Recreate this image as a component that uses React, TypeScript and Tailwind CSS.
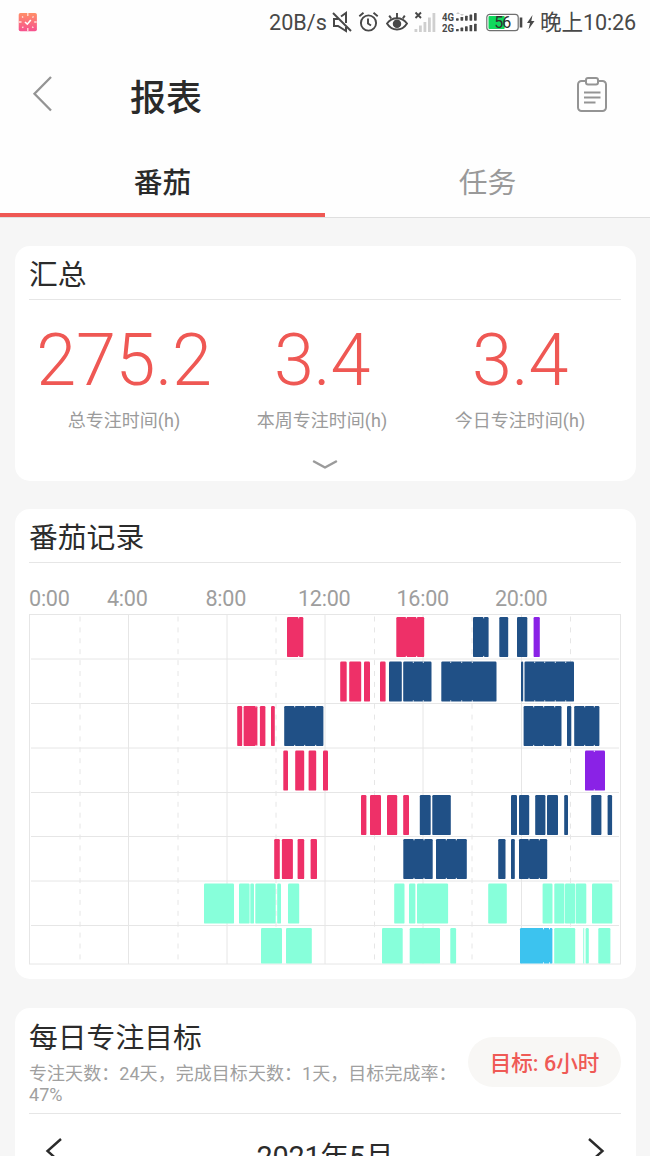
import type { ReactNode } from 'react';
import clsx from 'clsx';

type Color = 'pink' | 'navy' | 'purple' | 'mint' | 'sky';

interface Block {
  color: Color;
  // [start, end, ...joints between back-to-back sessions]
  spans: number[][];
}

const fills: Record<Color, string> = {
  pink: 'fill-[#ee3068]',
  navy: 'fill-[#205086]',
  purple: 'fill-[#8a22e6]',
  mint: 'fill-[#87ffda]',
  sky: 'fill-[#3cc3ef]',
};

const CHART_LEFT = 29;
const ROW_LINES = [0.5, 45, 89.5, 134, 178.5, 222.5, 267, 311.5, 350];
const SOLID_LINES = [99.5, 198, 296, 394, 492.5];
const DASHED_LINES = [51, 149, 247, 345.5, 443, 541.5];

const rows: Block[][] = [
  [
    { color: 'pink', spans: [[287, 303.3, 298.7], [396.3, 424.2, 406.3, 416.7]] },
    { color: 'navy', spans: [[473, 488.6, 483.7], [499.3, 508.2], [517, 527.3]] },
    { color: 'purple', spans: [[533.6, 539.8]] },
  ],
  [
    { color: 'pink', spans: [[340.2, 346.7], [349.2, 361.2], [364, 370], [380, 385.6]] },
    {
      color: 'navy',
      spans: [
        [389, 401.8],
        [403.2, 431.5, 413.3, 423.3],
        [441.3, 496.5, 450.7, 461.7, 472.3],
        [521, 523.2],
        [524.5, 574, 534.7, 544.7, 555.3, 565.7],
      ],
    },
  ],
  [
    { color: 'pink', spans: [[237.2, 242.2], [243.6, 257.4, 256], [259.9, 265.4], [271, 274.8]] },
    {
      color: 'navy',
      spans: [
        [284.2, 323.4, 294.7, 304.7, 315.7],
        [523.6, 561.5, 533.7, 543.7, 554.7],
        [567, 571.3],
        [574.2, 599.4, 584.7, 594.3],
      ],
    },
  ],
  [
    { color: 'pink', spans: [[283.3, 288], [295.2, 304.2], [308.6, 316.2], [323, 328]] },
    { color: 'purple', spans: [[585, 605, 594.3]] },
  ],
  [
    { color: 'pink', spans: [[361, 366.4], [370, 381], [387, 397.2], [403.2, 409]] },
    {
      color: 'navy',
      spans: [
        [419.8, 430.7],
        [432.3, 450.8],
        [511, 517],
        [519, 529.2],
        [535.2, 545.4],
        [547, 558],
        [564.2, 568],
        [591.2, 601.4],
        [607.6, 612.1],
      ],
    },
  ],
  [
    { color: 'pink', spans: [[274.2, 279.8], [281.9, 292.9], [297.6, 304.2], [310.6, 317]] },
    {
      color: 'navy',
      spans: [
        [403.3, 432.7, 414, 424],
        [436, 466.8, 446.3, 456.3],
        [498.2, 505.5],
        [511, 514.8],
        [519, 547.2, 529, 539.3],
      ],
    },
  ],
  [
    {
      color: 'mint',
      spans: [
        [204, 234],
        [239, 249.6],
        [250.3, 254],
        [255.3, 275.7],
        [277.2, 281],
        [288, 299.2],
        [394.2, 404.5],
        [409, 415.4],
        [417, 448.1],
        [488.2, 506.8],
        [542.6, 552.5],
        [554.3, 564.4],
        [565, 575.1],
        [575.7, 586.3],
        [592, 612.3],
      ],
    },
  ],
  [
    {
      color: 'mint',
      spans: [
        [261, 282],
        [286, 311.8],
        [382, 402.7],
        [409.7, 440],
        [450.3, 456.1],
        [554.2, 575.2],
        [583.3, 584.2],
        [585.6, 588.8],
        [598.3, 610.4],
      ],
    },
    { color: 'sky', spans: [[520, 552.4, 543.5, 549.5]] },
  ],
];

function Card({ children, className }: { children: ReactNode; className?: string }) {
  return <section className={clsx('rounded-[15px] bg-white px-[14.5px]', className)}>{children}</section>;
}

function CardTitle({ children }: { children: ReactNode }) {
  return (
    <h2 className="h-[54px] border-b border-[#e6e6e6] pt-[9px] text-[28.8px] leading-[40px] text-[#2b2b2b]">
      {children}
    </h2>
  );
}

function SignalBars() {
  return (
    <>
      {[0, 1, 2, 3, 4].map((i) => (
        <rect key={i} x={14 + i * 4.5} y={6.3 - i * 1.3} width="2.7" height={2.4 + i * 1.3} rx="0.6" />
      ))}
    </>
  );
}

function StatusBar() {
  return (
    <div className="flex h-[44px] items-center pr-[14px] pl-[18px] text-[21.6px] leading-[44px] text-[#484848]">
      {/* Notification */}
      <svg width="20" height="20" viewBox="0 0 20 20" fill="none">
        <defs>
          <linearGradient id="app" x1="0" y1="0" x2="0" y2="1">
            <stop offset="0" stopColor="#ff8f68" />
            <stop offset="1" stopColor="#f6518f" />
          </linearGradient>
        </defs>
        <rect x="0.7" y="1" width="18.2" height="18.2" rx="1.8" fill="url(#app)" />
        <path
          d="M9.8 1v3M9.8 16v3M1 10h2.5M16.2 10h2.5M4 4.5l1.2 1M15.6 4.5l-1.2 1M4.2 15.8l1.2-1M15.4 15.8l-1.2-1"
          stroke="#ffe3dc"
          strokeWidth="1.3"
        />
        <path d="m7 10 2.3 2.2L12.8 8" stroke="#fff" strokeWidth="1.6" />
      </svg>

      <span className="mt-[2px] ml-auto w-[63px]">20B/s</span>

      {/* Muted */}
      <svg width="20" height="22" viewBox="0 0 20 22" fill="none" stroke="currentColor" strokeWidth="2">
        <path d="M6.5 8H2v7h4l8 5v-4M9 5.5 14 2v10" />
        <path d="m1 2 18 18" />
      </svg>
      {/* Alarm */}
      <svg className="ml-[6px]" width="21" height="22" viewBox="0 0 21 22" fill="none" stroke="currentColor" strokeWidth="1.9">
        <circle cx="10.5" cy="12" r="7.6" />
        <path d="M10 7.5v5l3 2M1.3 5.2 5.5 1.8M19.7 5.2l-4.2-3.4" />
      </svg>
      {/* Eye comfort */}
      <svg className="ml-[7px]" width="22" height="22" viewBox="0 0 22 22" fill="none" stroke="currentColor" strokeWidth="1.9">
        <path d="M1 12.5C6 5.5 16 5.5 21 12.5C16 20.5 6 20.5 1 12.5Z" />
        <circle cx="11" cy="12.7" r="3.3" fill="currentColor" />
        <path d="M11 2v5M3.2 4.6l2 2.9M18.8 4.6l-2 2.9" />
      </svg>
      {/* No SIM */}
      <svg className="ml-[6px]" width="22" height="22" viewBox="0 0 22 22">
        <path d="m1.5 1.5 5.5 5.5m0-5.5L1.5 7" stroke="currentColor" strokeWidth="1.9" />
        <g className="fill-[#cfcfcf]">
          <rect x="0.5" y="18" width="2.8" height="3" />
          <rect x="5" y="14.5" width="2.8" height="6.5" />
          <rect x="9.5" y="11" width="2.8" height="10" />
          <rect x="14" y="6.5" width="2.8" height="14.5" />
          <rect x="18.5" y="2" width="2.8" height="19" />
        </g>
      </svg>
      {/* Dual network */}
      <svg className="ml-[6px]" width="36" height="22" viewBox="0 0 36 22" fill="currentColor">
        <text x="0" y="9.5" className="text-[11px] font-bold" textLength="12" lengthAdjust="spacingAndGlyphs">4G</text>
        <text x="0" y="20.5" className="text-[11px] font-bold" textLength="12" lengthAdjust="spacingAndGlyphs">2G</text>
        <path d="m14 3 2-2 2 2zm2 0v2m2-2 2 2 2-2z" fill="#c8c8c8" />
        <g transform="translate(0 1)"><SignalBars /></g>
        <g transform="translate(0 11.6)"><SignalBars /></g>
      </svg>
      {/* Battery */}
      <svg className="ml-[8px]" width="50" height="20" viewBox="0 0 50 20">
        <rect x="0.8" y="2.3" width="31.4" height="16.4" rx="3" fill="#fff" stroke="#707070" strokeWidth="1.2" />
        <rect x="2.5" y="4" width="16.2" height="13" rx="1" fill="#0fd85c" />
        <text x="8.2" y="16.3" className="fill-[#303030] text-[16px]" textLength="17">56</text>
        <rect x="33.7" y="5.5" width="2.6" height="10" fill="currentColor" />
        <path d="M46.5 3 41 11h3l-1.5 6.5L48.5 9h-3.2z" fill="currentColor" />
      </svg>
      <span className="mt-[2px] ml-[4px] tracking-[-0.15px] whitespace-nowrap">晚上10:26</span>
    </div>
  );
}

function Header() {
  return (
    <header className="flex h-[104px] items-center pr-[42px] pl-[32px]">
      <svg className="-mt-[5px]" width="22" height="36" viewBox="0 0 22 36" fill="none" stroke="#949494" strokeWidth="2.3">
        <path d="M19 1 2.5 17.8 19 34.5" />
      </svg>
      <h1 className="mt-[5px] ml-[76px] text-[36px] leading-[48px] font-medium text-[#2a2a2a]">报表</h1>
      <svg className="-mt-[5px] ml-auto" width="32" height="38" viewBox="0 0 32 38" fill="none" stroke="#949494" strokeWidth="2">
        <path d="M10 6H5.5A3.5 3.5 0 0 0 2 9.500V32.500A3.500 3.500 0 0 0 5.500 36h21a3.500 3.500 0 0 0 3.500-3.500V9.500A3.500 3.500 0 0 0 26.500 6H22" />
        <rect x="10" y="3" width="12" height="6.5" rx="2" />
        <path d="M8 17.500h16.500M8 22.500h16.500M8 27.500h11.500" />
      </svg>
    </header>
  );
}

const stats = [
  { value: '275.2', label: '总专注时间(h)' },
  { value: '3.4', label: '本周专注时间(h)' },
  { value: '3.4', label: '今日专注时间(h)' },
];

function Summary() {
  return (
    <Card className="h-[235px]">
      <CardTitle>汇总</CardTitle>
      <div className="mr-[2px] -ml-[4px] grid grid-cols-3 text-center">
        {stats.map((s) => (
          <div key={s.label}>
            <div className="mt-[19px] h-[84px] text-[72px] leading-[84px] font-light tracking-[-0.3px] text-[#ef5854]">
              {s.value}
            </div>
            <div className="mt-[5px] text-[18px] leading-[26px] text-[#9b9b9b]">{s.label}</div>
          </div>
        ))}
      </div>
      <svg className="mx-auto mt-[25px]" width="26" height="12" viewBox="0 0 26 12" fill="none" stroke="#9b9b9b" strokeWidth="2.5">
        <path d="m2 2.5 11 6 11-6" strokeLinecap="round" strokeLinejoin="round" />
      </svg>
    </Card>
  );
}

function Records() {
  return (
    <Card className="mt-[28px] h-[470px]">
      <CardTitle>番茄记录</CardTitle>
      <div className="mt-[20px] flex h-[31px] text-[21.6px] leading-[31px] tracking-[-0.25px] text-[#9e9e9e]">
        <span className="w-[49px]">0:00</span>
        {['4:00', '8:00', '12:00', '16:00', '20:00'].map((t) => (
          <span key={t} className="w-[98.5px] text-center">{t}</span>
        ))}
      </div>
      <svg className="-ml-[0.5px]" width="593" height="352" viewBox="0 0 593 352">
        <g className="stroke-[#e6e6e6]" fill="none">
          <rect x="0.5" y="0.5" width="591" height="349.5" />
          {ROW_LINES.slice(1, -1).map((y) => (
            <path key={y} d={`M2 ${y}H590`} />
          ))}
          {SOLID_LINES.map((x) => (
            <path key={x} d={`M${x} 1V350`} />
          ))}
          {DASHED_LINES.map((x) => (
            <path key={x} d={`M${x} 2.5V350`} strokeDasharray="5 5.9" />
          ))}
        </g>
        {rows.map((blocks, r) => {
          const top = ROW_LINES[r] + 2.6;
          const height = r === rows.length - 1 ? 35.5 : 40;
          return blocks.map((block) => (
            <g key={`${r}-${block.color}`} className={fills[block.color]}>
              {block.spans.map(([start, end, ...joints]) => (
                <g key={start}>
                  <rect x={start - CHART_LEFT} y={top} width={end - start} height={height} rx={Math.min(1.2, (end - start) / 2)} />
                  {joints.map((j) => (
                    <g key={j} className="fill-white">
                      <rect x={j - CHART_LEFT - 0.5} y={top} width="1" height="1.2" />
                      <rect x={j - CHART_LEFT - 0.5} y={top + height - 1.2} width="1" height="1.2" />
                    </g>
                  ))}
                </g>
              ))}
            </g>
          ));
        })}
      </svg>
    </Card>
  );
}

function DailyGoal() {
  return (
    <Card className="mt-[29px] h-[200px]">
      <div className="flex h-[106px] items-start justify-between border-b border-[#e6e6e6]">
        <div className="w-[430px]">
          <h2 className="mt-[10px] text-[28.8px] leading-[40px] text-[#2b2b2b]">每日专注目标</h2>
          <p className="mt-[5px] text-[18px] leading-[21px] tracking-[0.05px] text-[#a0a0a0]">
            专注天数：24天，完成目标天数：1天，目标完成率：47%
          </p>
        </div>
        <button className="mt-[29px] h-[50px] w-[153px] rounded-full bg-[#f8f7f5] pt-[2px] text-[21.6px] leading-[50px] font-medium whitespace-nowrap text-[#ef5a55]">
          目标: 6小时
        </button>
      </div>
      <div className="flex justify-between px-[16px] pt-[22px]">
        <svg className="mt-[1px]" width="18" height="28" viewBox="0 0 18 28" fill="none" stroke="#2b2b2b" strokeWidth="2.4">
          <path d="M16 2 2.5 14 16 26" />
        </svg>
        <span className="mt-[3px] text-[28.8px] leading-[36px] tracking-[-0.2px] text-[#2b2b2b]">2021年5月</span>
        <svg className="mt-[1px]" width="18" height="28" viewBox="0 0 18 28" fill="none" stroke="#2b2b2b" strokeWidth="2.4">
          <path d="m2 2 13.5 12L2 26" />
        </svg>
      </div>
    </Card>
  );
}

export default function App() {
  return (
    <div className="h-[1156px] w-[650px] overflow-hidden bg-[#f6f6f6] font-[Roboto,'Noto_Sans_CJK_SC',sans-serif]">
      <div className="h-[218px] border-b border-[#dfdfdf] bg-[#fefefe]">
        <StatusBar />
        <Header />
        <nav className="flex h-[69px] text-center text-[28.8px] leading-[70px]">
          <div className="w-1/2 border-b-4 border-[#ef5854] font-medium text-[#2a2a2a]">番茄</div>
          <div className="w-1/2 text-[#999]">任务</div>
        </nav>
      </div>
      <main className="px-[14.5px] pt-[28px]">
        <Summary />
        <Records />
        <DailyGoal />
      </main>
    </div>
  );
}
